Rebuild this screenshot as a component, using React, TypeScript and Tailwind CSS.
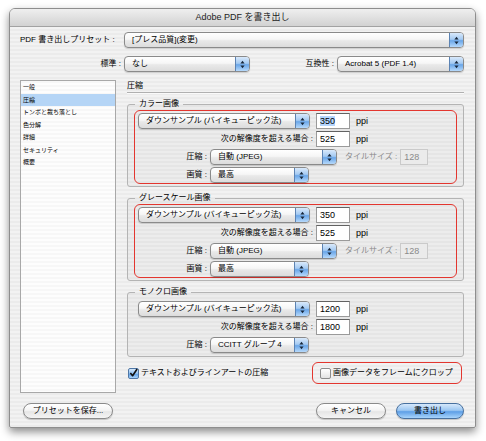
import React from 'react'

function Arrows() {
  return (
    <svg width="5" height="9" viewBox="0 0 5 9" className="block">
      <path d="M2.5 0.8 L4.6 3.4 L0.4 3.4 Z" fill="#16263a" />
      <path d="M2.5 8.2 L4.6 5.6 L0.4 5.6 Z" fill="#16263a" />
    </svg>
  )
}

function Popup({ className, label }: { className: string; label: string }) {
  return (
    <div
      className={`flex h-[16px] shrink-0 overflow-hidden rounded-[4px] border border-[#8a8a8a] bg-[linear-gradient(to_bottom,#ffffff_0%,#f6f6f6_45%,#e9e9e9_55%,#dcdcdc_100%)] shadow-[0_1px_1px_rgba(0,0,0,0.15)] ${className}`}
    >
      <span className="flex-1 truncate pl-[7px] text-[8px] leading-[14px] text-black">{label}</span>
      <span className="flex w-[14px] items-center justify-center border-l border-[#5c83b3] bg-[linear-gradient(to_bottom,#d9e9fb_0%,#a4caf2_45%,#6aa6e8_55%,#b6d9fb_100%)]">
        <Arrows />
      </span>
    </div>
  )
}

function Field({
  value,
  className,
  selected,
  disabled,
}: {
  value: string
  className: string
  selected?: boolean
  disabled?: boolean
}) {
  return (
    <div
      className={`h-[16px] shrink-0 border pl-[3px] text-[9px] leading-[14px] ${
        disabled
          ? 'border-[#cacaca] bg-[#ebebeb] text-[#8a8a8a]'
          : 'border-[#9a9a9a] border-t-[#626262] bg-white text-black'
      } ${className}`}
    >
      <span className={selected ? 'bg-[#b4d5fd]' : ''}>{value}</span>
    </div>
  )
}

function Checkbox({ checked }: { checked?: boolean }) {
  if (checked) {
    return (
      <span className="flex h-[11px] w-[11px] shrink-0 items-center justify-center rounded-[2px] border border-[#4f77a6] bg-[linear-gradient(to_bottom,#d5e8fb_0%,#8fbff0_50%,#5d9fe6_55%,#a9d3fb_100%)]">
        <svg width="10" height="10" viewBox="0 0 10 10" className="block">
          <path d="M1.5 5 L4 8 L9 0.5" fill="none" stroke="#111" strokeWidth="1.8" strokeLinejoin="round" />
        </svg>
      </span>
    )
  }
  return (
    <span className="h-[11px] w-[11px] shrink-0 rounded-[2px] border border-[#8c8c8c] bg-[linear-gradient(to_bottom,#ffffff_0%,#f2f2f2_50%,#e2e2e2_100%)]" />
  )
}

function Group({
  title,
  highlight,
  children,
}: {
  title: string
  highlight?: boolean
  children: React.ReactNode
}) {
  return (
    <fieldset className="mt-[6px] rounded-[3px] border border-[#b4b4b4] bg-[rgba(0,0,0,0.025)] px-[6px] pb-[2px]">
      <legend className="ml-[1px] px-[4px] text-[8px] leading-[10px]">{title}</legend>
      <div
        className={`mt-[1px] flex flex-col gap-[2px] rounded-[6px] border px-[3px] pt-[2px] ${
          highlight ? 'border-[#e3362f]' : 'border-transparent'
        }`}
      >
        {children}
      </div>
    </fieldset>
  )
}

function DownsampleRows({ res, over, selected }: { res: string; over: string; selected?: boolean }) {
  return (
    <>
      <div className="flex h-[16px] items-center">
        <Popup className="w-[172px]" label="ダウンサンプル (バイキューピック法)" />
        <Field value={res} className="ml-[6px] w-[34px]" selected={selected} />
        <span className="ml-[6px] text-[9px] leading-[16px]">ppi</span>
      </div>
      <div className="flex h-[16px] items-center">
        <span className="w-[176px] pr-[1px] text-right text-[8px]">次の解像度を超える場合 :</span>
        <Field value={over} className="ml-[2px] w-[34px]" />
        <span className="ml-[6px] text-[9px] leading-[16px]">ppi</span>
      </div>
    </>
  )
}

function JpegRows() {
  return (
    <>
      <div className="flex h-[16px] items-center">
        <span className="w-[70px] pr-[1px] text-right text-[8px]">圧縮 :</span>
        <Popup className="ml-[2px] w-[127px]" label="自動 (JPEG)" />
        <span className="ml-[8px] text-[8px] text-[#8a8a8a]">タイルサイズ :</span>
        <Field value="128" className="ml-[3px] w-[28px]" disabled />
      </div>
      <div className="flex h-[16px] items-center">
        <span className="w-[70px] pr-[1px] text-right text-[8px]">画質 :</span>
        <Popup className="ml-[2px] w-[99px]" label="最高" />
      </div>
    </>
  )
}

function PillButton({ label, className, primary }: { label: string; className: string; primary?: boolean }) {
  return (
    <div
      className={`flex h-[16px] items-center justify-center rounded-full border text-[8px] leading-[14px] shadow-[0_1px_1px_rgba(0,0,0,0.2)] ${
        primary
          ? 'border-[#47709f] bg-[linear-gradient(to_bottom,#d6e8fb_0%,#9cc7f2_45%,#5e9fe6_55%,#a8d4fc_100%)]'
          : 'border-[#8a8a8a] bg-[linear-gradient(to_bottom,#ffffff_0%,#f4f4f4_45%,#e6e6e6_55%,#f4f4f4_100%)]'
      } ${className}`}
    >
      {label}
    </div>
  )
}

const sideItems = ['一般', '圧縮', 'トンボと裁ち落とし', '色分解', '詳細', 'セキュリティ', '概要']

export default function App() {
  return (
    <div className="h-[441px] w-[486px] bg-white pl-[9px] pt-[8px] font-['Liberation_Sans','Noto_Sans_CJK_JP',sans-serif] text-black">
      <div className="flex h-[420px] w-[467px] flex-col overflow-hidden rounded-t-[6px] rounded-b-[2px] border border-[#8e8e8e] bg-[repeating-linear-gradient(to_bottom,#ebebeb_0px,#ebebeb_2px,#f2f2f2_2px,#f2f2f2_4px)] shadow-[0_4px_9px_rgba(0,0,0,0.45)]">
        <div className="flex h-[18px] shrink-0 items-center justify-center border-b border-[#a2a2a2] bg-[linear-gradient(to_bottom,#efefef,#d2d2d2)] text-[9px] text-[#1c1c1c]">
          Adobe PDF を書き出し
        </div>

        <div className="flex flex-col pl-[10px] pr-[11px] pt-[5px]">
          <div className="flex h-[16px] items-center">
            <span className="w-[104px] text-[8px]">PDF 書き出しプリセット :</span>
            <Popup className="w-[340px]" label="[プレス品質](変更)" />
          </div>

          <div className="mt-[8px] flex h-[16px] items-center">
            <span className="w-[104px] pr-[3px] text-right text-[8px]">標準 :</span>
            <Popup className="w-[126px]" label="なし" />
            <span className="flex-1 pr-[3px] text-right text-[8px]">互換性 :</span>
            <Popup className="w-[127px]" label="Acrobat 5 (PDF 1.4)" />
          </div>

          <div className="mt-[8px] flex h-[313px]">
            <div className="w-[96px] shrink-0 border border-[#a8a8a8] bg-[repeating-linear-gradient(to_bottom,#f7f7f7_0px,#f7f7f7_2px,#fdfdfd_2px,#fdfdfd_4px)]">
              {sideItems.map((item) => (
                <div
                  key={item}
                  className={`h-[12.5px] pl-[2px] text-[6px] leading-[12.5px] ${
                    item === '圧縮' ? 'bg-[#b5d5f6]' : ''
                  }`}
                >
                  {item}
                </div>
              ))}
            </div>

            <div className="ml-[11px] flex w-[338px] flex-col">
              <div className="h-[13px] border-b border-[#b0b0b0] text-[8px] leading-[12px] shadow-[0_1px_0_#fafafa]">
                圧縮
              </div>

              <Group title="カラー画像" highlight>
                <DownsampleRows res="350" over="525" selected />
                <JpegRows />
              </Group>

              <Group title="グレースケール画像" highlight>
                <DownsampleRows res="350" over="525" />
                <JpegRows />
              </Group>

              <Group title="モノクロ画像">
                <DownsampleRows res="1200" over="1800" />
                <div className="flex h-[16px] items-center">
                  <span className="w-[70px] pr-[1px] text-right text-[8px]">圧縮 :</span>
                  <Popup className="ml-[2px] w-[99px]" label="CCITT グループ 4" />
                </div>
              </Group>

              <div className="mt-[5px] flex h-[22px] items-center justify-between pl-[1px] pr-[2px]">
                <div className="flex items-center">
                  <Checkbox checked />
                  <span className="ml-[2px] text-[8px]">テキストおよびラインアートの圧縮</span>
                </div>
                <div className="flex h-[22px] w-[150px] items-center rounded-[6px] border border-[#e3362f] pl-[7px]">
                  <Checkbox />
                  <span className="ml-[2px] text-[8px]">画像データをフレームにクロップ</span>
                </div>
              </div>
            </div>
          </div>

          <div className="mt-[10px] flex h-[16px] items-center">
            <PillButton label="プリセットを保存..." className="ml-[3px] w-[90px]" />
            <div className="flex-1" />
            <PillButton label="キャンセル" className="w-[70px]" />
            <PillButton label="書き出し" className="ml-[10px] w-[68px]" primary />
          </div>
        </div>
      </div>
    </div>
  )
}
